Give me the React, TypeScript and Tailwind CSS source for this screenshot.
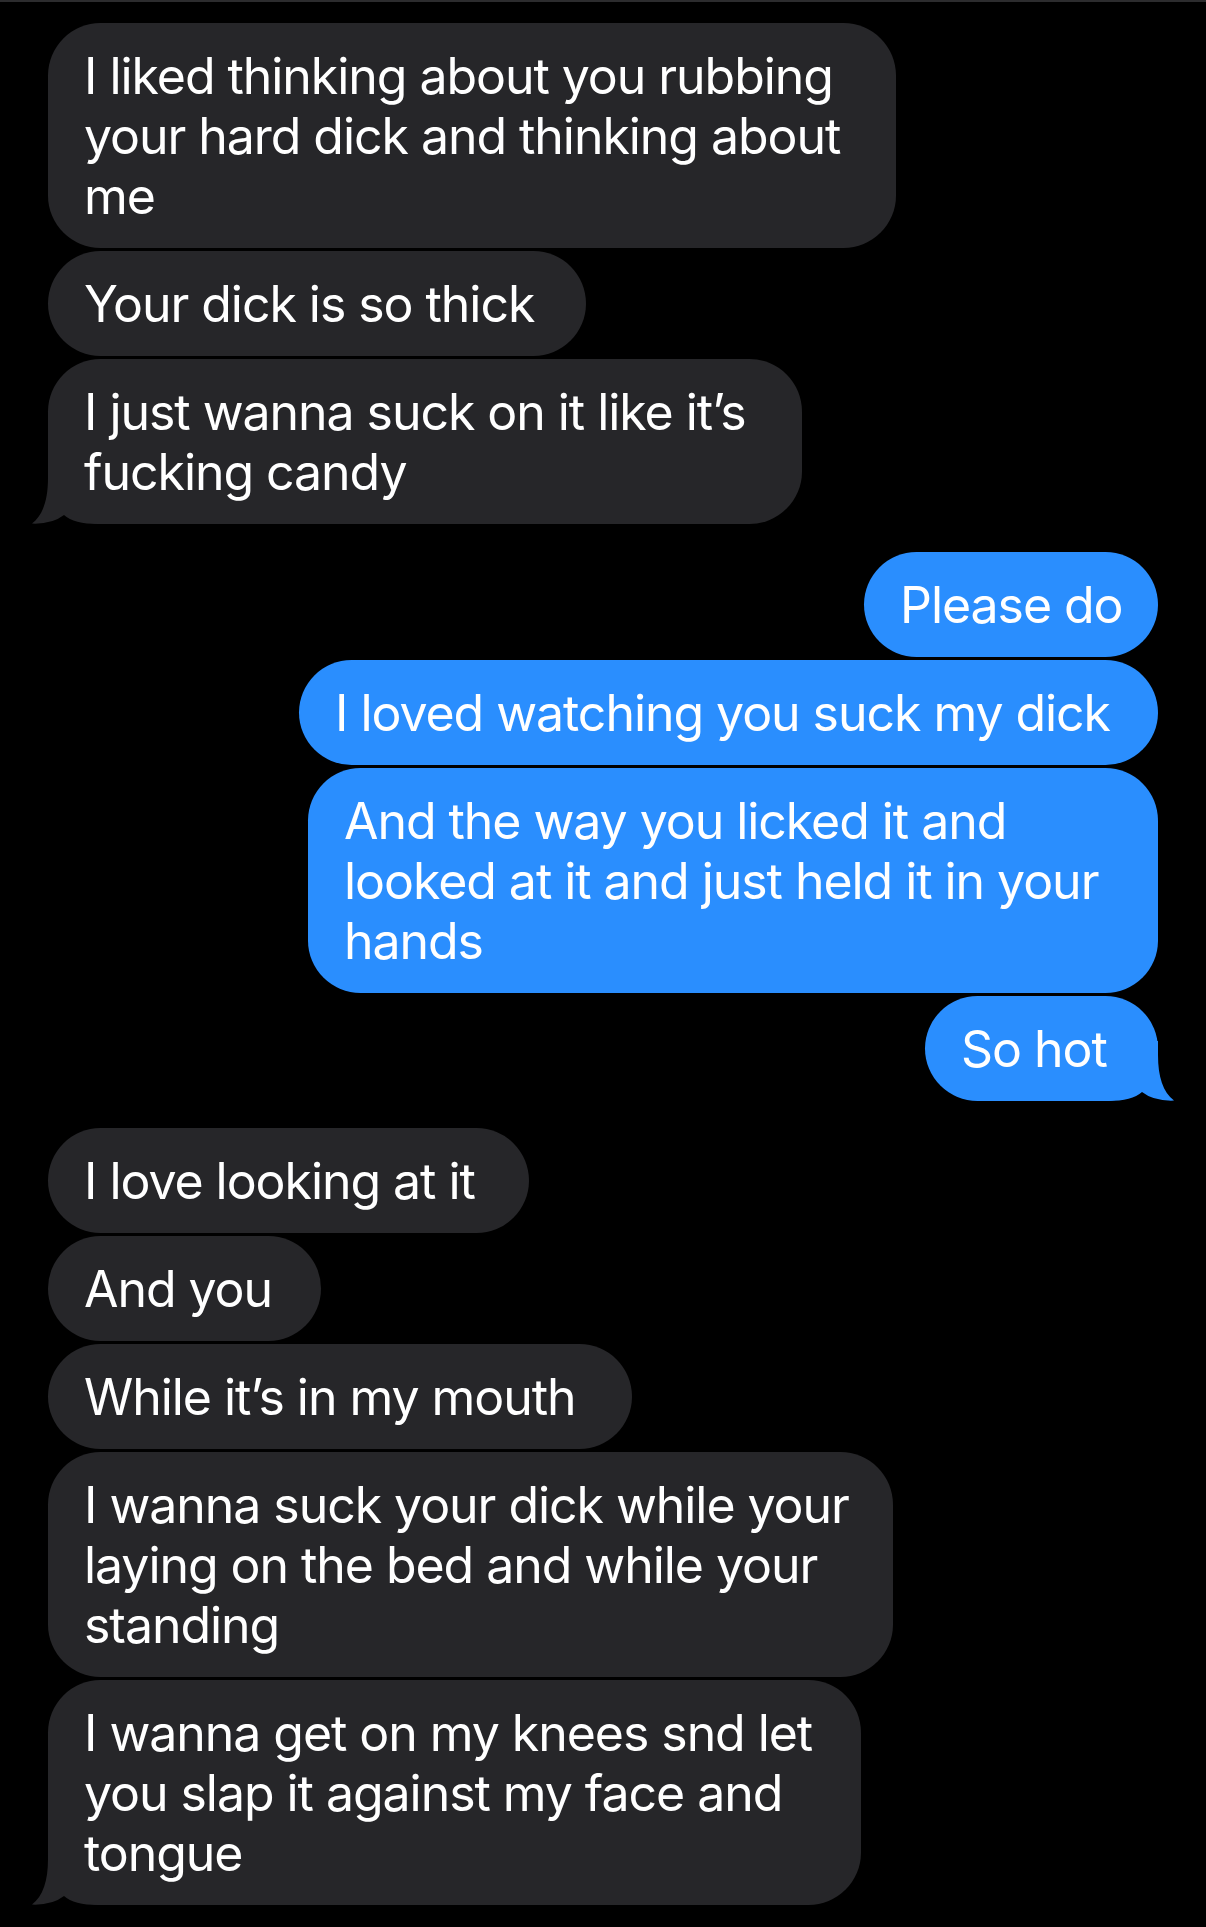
import React from "react";

type Msg = { lines: string[]; w: string; tail?: boolean };

const TailLeft = ({ color }: { color: string }) => (
  <svg
    className="absolute left-[-16px] bottom-0 w-[70px] h-[60px]"
    viewBox="0 0 70 60"
    fill={color}
  >
    <path d="M16 0 L16 14 C16 36 11 51 0 59.6 Q20 60.4 32 51 Q42 60 66 60 L70 60 L70 0 Z" />
  </svg>
);

const TailRight = ({ color }: { color: string }) => (
  <svg
    className="absolute right-[-16px] bottom-0 w-[70px] h-[60px] -scale-x-100"
    viewBox="0 0 70 60"
    fill={color}
  >
    <path d="M16 0 L16 14 C16 36 11 51 0 59.6 Q20 60.4 32 51 Q42 60 66 60 L70 60 L70 0 Z" />
  </svg>
);

const Received = ({ m }: { m: Msg }) => (
  <div className={`relative self-start ${m.w} bg-[#262629] rounded-[52.5px] pl-[36px] pr-[20px] py-[22.5px]`}>
    {m.tail && <TailLeft color="#262629" />}
    <div className="relative text-white text-[50px] leading-[60px] tracking-[-1.05px] whitespace-nowrap">
      {m.lines.map((l, i) => (
        <div key={i}>{l}</div>
      ))}
    </div>
  </div>
);

const Sent = ({ m }: { m: Msg }) => (
  <div className={`relative self-end ${m.w} bg-[#2a8efe] rounded-[52.5px] pl-[36px] pr-[20px] py-[22.5px]`}>
    {m.tail && <TailRight color="#2a8efe" />}
    <div className="relative text-white text-[50px] leading-[60px] tracking-[-1.05px] whitespace-nowrap">
      {m.lines.map((l, i) => (
        <div key={i}>{l}</div>
      ))}
    </div>
  </div>
);

export default function App() {
  const g1: Msg[] = [
    {
      lines: ["I liked thinking about you rubbing", "your hard dick and thinking about", "me"],
      w: "w-[848px]",
    },
    { lines: ["Your dick is so thick"], w: "w-[538px]" },
    { lines: ["I just wanna suck on it like it\u2019s", "fucking candy"], w: "w-[754px]", tail: true },
  ];
  const g2: Msg[] = [
    { lines: ["Please do"], w: "w-[294px]" },
    { lines: ["I loved watching you suck my dick"], w: "w-[859px]" },
    {
      lines: ["And the way you licked it and", "looked at it and just held it in your", "hands"],
      w: "w-[850px]",
    },
    { lines: ["So hot"], w: "w-[233px]", tail: true },
  ];
  const g3: Msg[] = [
    { lines: ["I love looking at it"], w: "w-[481px]" },
    { lines: ["And you"], w: "w-[273px]" },
    { lines: ["While it\u2019s in my mouth"], w: "w-[584px]" },
    {
      lines: ["I wanna suck your dick while your", "laying on the bed and while your", "standing"],
      w: "w-[845px]",
    },
    {
      lines: ["I wanna get on my knees snd let", "you slap it against my face and", "tongue"],
      w: "w-[813px]",
      tail: true,
    },
  ];

  return (
    <div
      className="w-[1206px] min-h-[1927px] bg-black"
      style={{ fontFamily: "Inter, 'Noto Sans', sans-serif" }}
    >
      <div className="h-[2px] bg-[#2c2c2e]" />
      <div className="flex flex-col px-[48px] pt-[21px]">
        <div className="flex flex-col gap-[3px]">
          {g1.map((m, i) => (
            <Received key={i} m={m} />
          ))}
        </div>
        <div className="flex flex-col gap-[3px] mt-[28px]">
          {g2.map((m, i) => (
            <Sent key={i} m={m} />
          ))}
        </div>
        <div className="flex flex-col gap-[3px] mt-[27px]">
          {g3.map((m, i) => (
            <Received key={i} m={m} />
          ))}
        </div>
      </div>
    </div>
  );
}
